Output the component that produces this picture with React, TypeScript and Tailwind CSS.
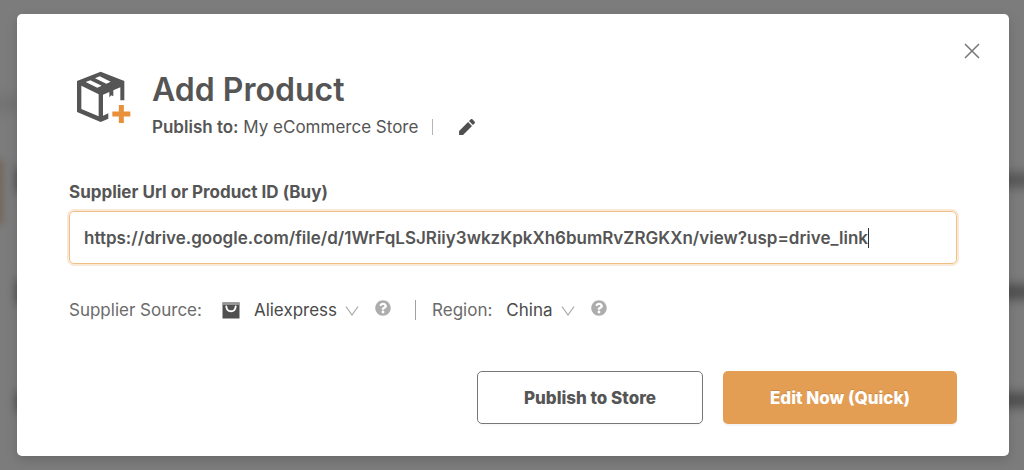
import { useState } from "react";

function BoxIcon() {
  return (
    <svg viewBox="0 0 198 186" className="h-[62px] w-[66px] shrink-0" aria-hidden="true">
      <path
        fill="#555555"
        fillRule="evenodd"
        d="M92 20 L163 48 V106 H151 V67 L130 76 V94 L124 91 L118 97 V81 L99 89 V152 L115 145 V161 L92 171 L21 141 V48 Z M34 62 V132 L86 154 V88 Z M47 51 L82 68 L95 62 L61 46 Z M75 40 L109 56 L122 50 L89 34 Z"
      />
      <path d="M154 120V174M127 147H181" stroke="#e8913a" strokeWidth="15" fill="none" />
    </svg>
  );
}

function PencilIcon() {
  return (
    <svg viewBox="0 0 24 24" className="size-5" fill="#505050" aria-hidden="true">
      <path d="M2.500 16.800V21.500h4.700L18 10.700l-4.700-4.700L2.500 16.800zM21 7.700c.8-.8.8-1.600 0-2.400l-2.300-2.300c-.8-.8-1.600-.8-2.400 0l-1.900 1.900 4.700 4.700 1.900-1.900z" />
    </svg>
  );
}

function BagIcon() {
  return (
    <svg viewBox="0 0 18 17" className="ml-5 h-[17px] w-[18px]" aria-hidden="true">
      <rect x="0.5" y="0.5" width="17" height="16" fill="#505050" />
      <rect x="0.5" y="0.5" width="17" height="2.5" fill="#969696" />
      <path d="M4.300 4.500C5 10.800 13 10.800 13.700 4.500" fill="none" stroke="#fff" strokeWidth="1.900" strokeLinecap="round" />
    </svg>
  );
}

function Help({ label }: { label: string }) {
  return (
    <button type="button" aria-label={label} className="mb-1 size-4">
      <svg viewBox="0 0 512 512" className="size-4" fill="#adadad" aria-hidden="true">
        <path d="M504 256c0 137-111 248-248 248S8 393 8 256 119 8 256 8s248 111 248 248zM262.700 90c-54.500 0-89.300 23-116.500 63.800-3.500 5.300-2.400 12.400 2.700 16.300l34.700 26.300c5.200 3.900 12.600 3 16.700-2.100 17.900-22.700 30.100-35.800 57.300-35.800 20.400 0 45.700 13.100 45.700 33 0 15-12.400 22.700-32.500 34C247.100 238.500 216 254.900 216 296v4c0 6.600 5.400 12 12 12h56c6.600 0 12-5.400 12-12v-1.300c0-28.500 83.200-29.600 83.200-106.700 0-58-60.200-102-116.500-102zM256 338c-25.400 0-46 20.600-46 46s20.600 46 46 46 46-20.600 46-46-20.600-46-46-46z" />
      </svg>
    </button>
  );
}

function Picker({ id, options }: { id: string; options: string[] }) {
  return (
    <span className="flex items-center gap-2">
      <select id={id} className="appearance-none bg-transparent text-[#4a4a4a] outline-none [field-sizing:content]">
        {options.map((option) => (
          <option key={option}>{option}</option>
        ))}
      </select>
      <svg viewBox="0 0 14 10" className="mt-0.5 h-[10px] w-[14px]" aria-hidden="true">
        <path d="M1 0.5L7 9L13 0.5" fill="none" stroke="#a8a8a8" strokeWidth="1.200" />
      </svg>
    </span>
  );
}

function Backdrop() {
  return (
    <div className="absolute inset-0 overflow-hidden" aria-hidden="true">
      <div className="absolute -left-6 top-24 h-4 w-11 bg-[#727272] blur-[6px]" />
      <div className="absolute -left-3 top-40 h-16 w-4 bg-[#74695f] blur-[3px]" />
      <div className="absolute left-4 top-42 h-6 w-8 bg-[#505050] blur-[5px]" />
      <div className="absolute left-4 top-70 h-6 w-8 bg-[#505050] blur-[5px]" />
      <div className="absolute left-4 top-98 h-5 w-8 bg-[#505050] blur-[5px]" />
      <div className="absolute -right-3 top-43 h-4 w-14 bg-[#5a5a5a] blur-[5px]" />
      <div className="absolute -right-3 top-71 h-4 w-14 bg-[#525252] blur-[5px]" />
      <div className="absolute -right-3 top-98 h-4 w-14 bg-[#525252] blur-[5px]" />
    </div>
  );
}

export default function App() {
  const [url, setUrl] = useState(
    "https://drive.google.com/file/d/1WrFqLSJRiiy3wkzKpkXh6bumRvZRGKXn/view?usp=drive_link"
  );

  return (
    <div className="relative min-h-screen bg-[#7c7c7c] pt-[14px] pr-[15px] pb-[14px] pl-[17px] font-['Inter',sans-serif] text-[17px] leading-6 text-[#555555]">
      <Backdrop />
      <main
        role="dialog"
        aria-labelledby="dialog-title"
        className="relative rounded-[5px] bg-white px-[52px] pt-[27px] pb-8 shadow-[0_4px_12px_rgba(0,0,0,0.15)]"
      >
        <div className="-mr-[25px] flex h-5 items-center justify-end">
          <button type="button" aria-label="Close" className="size-5">
            <svg viewBox="0 0 20 20" className="size-5" aria-hidden="true">
              <path d="M3 3L17 17M17 3L3 17" stroke="#777777" strokeWidth="1.500" fill="none" />
            </svg>
          </button>
        </div>

        <header className="flex gap-4 pt-1 pl-px">
          <BoxIcon />
          <div>
            <h1 id="dialog-title" className="pt-[5px] text-[32px] leading-10 font-semibold">
              Add Product
            </h1>
            <div className="flex items-center pt-[5px]">
              <p>
                <strong className="font-semibold">Publish to:</strong> My eCommerce Store
              </p>
              <span className="ml-[14px] h-4 w-px bg-[#b5b5b5]" />
              <button type="button" aria-label="Edit store" className="ml-6 size-5">
                <PencilIcon />
              </button>
            </div>
          </div>
        </header>

        <label htmlFor="product-url" className="mt-[41px] block font-bold">
          Supplier Url or Product ID (Buy)
        </label>
        <div className="mt-[7px] flex h-[53px] items-center rounded-[5px] border border-[#f0bf85] px-[14px] shadow-[0_0_0_2px_rgba(232,145,58,0.2)]">
          <input
            id="product-url"
            type="text"
            value={url}
            onChange={(event) => setUrl(event.target.value)}
            className="max-w-full bg-transparent font-semibold outline-none [field-sizing:content]"
          />
          <span className="h-5 w-px bg-[#333333]" />
        </div>

        <div className="mt-[34px] flex items-center text-[#6b6b6b]">
          <label htmlFor="source">Supplier Source:</label>
          <BagIcon />
          <span className="ml-[14px] flex items-center gap-4">
            <Picker id="source" options={["Aliexpress", "Amazon"]} />
            <Help label="About supplier source" />
          </span>
          <span className="mr-4 ml-6 h-5 w-px bg-[#a0a0a0]" />
          <label htmlFor="region">Region:</label>
          <span className="ml-[14px] flex items-center gap-4">
            <Picker id="region" options={["China", "United States"]} />
            <Help label="About region" />
          </span>
        </div>

        <div className="mt-[49px] flex justify-end gap-5 font-extrabold">
          <button
            type="button"
            className="h-[53px] w-[226px] rounded-[5px] border border-[#777777] bg-white shadow-[0_2px_0_rgba(0,0,0,0.02)]"
          >
            Publish to Store
          </button>
          <button
            type="button"
            className="h-[53px] w-[234px] rounded-[5px] bg-[#e39e54] text-white shadow-[0_2px_0_rgba(0,0,0,0.04)] [text-shadow:0_-1px_0_rgba(0,0,0,0.12)]"
          >
            Edit Now (Quick)
          </button>
        </div>
      </main>
    </div>
  );
}
